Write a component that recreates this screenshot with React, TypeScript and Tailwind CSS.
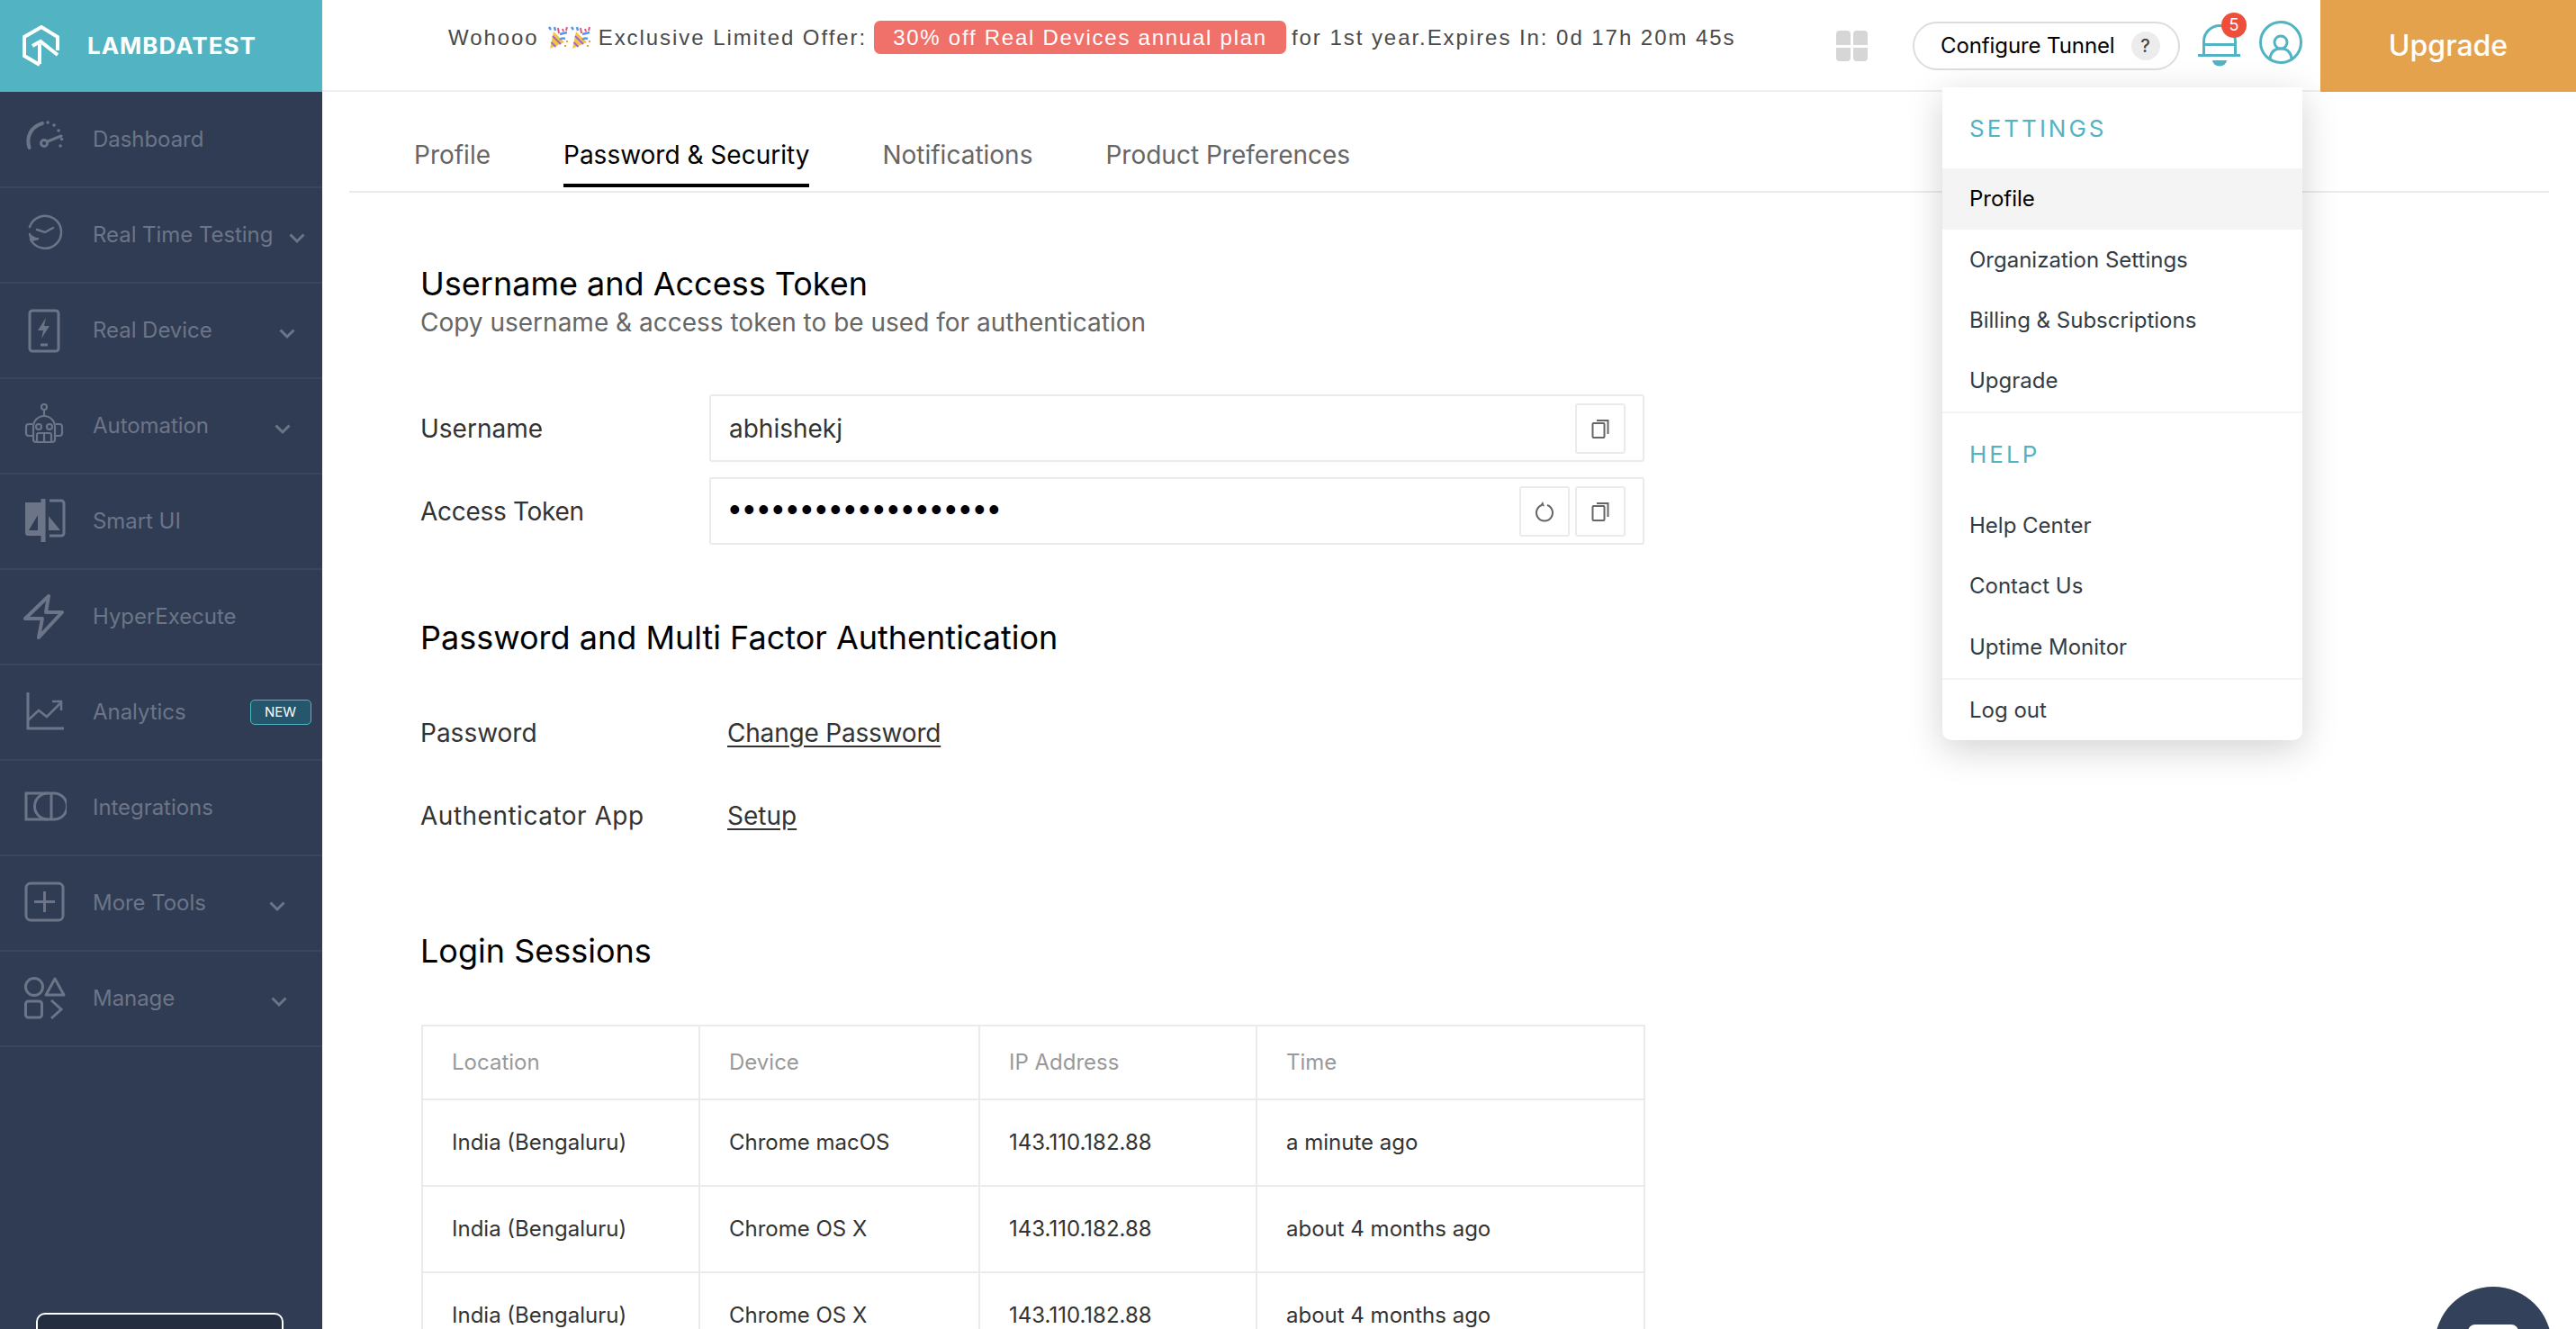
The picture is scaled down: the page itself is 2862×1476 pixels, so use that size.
import React from "react";

const ICON = "#6c7587";

function Chevron({ ml }: { ml: string }) {
  return (
    <svg className={`${ml} mt-[8px] shrink-0`} width="18" height="12" viewBox="0 0 18 12" fill="none" stroke={ICON} strokeWidth="3">
      <path d="M1.500 1.500 9 9l7.500-7.500" />
    </svg>
  );
}

const icons: Record<string, React.ReactNode> = {
  dashboard: (
    <g fill="none" stroke={ICON} strokeWidth="3" strokeLinecap="round">
      <path d="M6.500 34C3 22 8 11 21 7" strokeWidth="4" />
      <circle cx="23" cy="29" r="3.500" />
      <path d="M27 27l15-6" />
      <path d="M27 6h.1M34 9h.1M39 15h.1M42.500 24.500h.1M41 32h.1" strokeWidth="3.500" />
    </g>
  ),
  clock: (
    <g fill="none" stroke={ICON} strokeWidth="2.500" strokeLinecap="round">
      <path d="M8 30A18 18 0 1 0 7 16" />
      <path d="M7 24l2 7 7-2" fill={ICON} />
      <path d="M15 19l9 3 9-5" />
    </g>
  ),
  device: (
    <g fill="none" stroke={ICON} strokeWidth="3">
      <rect x="7" y="3" width="32" height="45" rx="3" />
      <path d="M25 11l-9 14h6l-2 9 9-14h-6z" fill={ICON} stroke="none" />
      <path d="M19 41h8" />
    </g>
  ),
  robot: (
    <g fill="none" stroke={ICON} strokeWidth="2.200">
      <circle cx="23" cy="4" r="3" />
      <path d="M23 7v7" />
      <path d="M11 40V26a12 12 0 0 1 12-12 12 12 0 0 1 12 12v14a3 3 0 0 1-3 3H14a3 3 0 0 1-3-3z" />
      <path d="M10 23H6a3 3 0 0 0-3 3v7a3 3 0 0 0 3 3h4M36 23h4a3 3 0 0 1 3 3v7a3 3 0 0 1-3 3h-4" />
      <circle cx="17" cy="26" r="3" />
      <circle cx="29" cy="26" r="3" />
      <path d="M15 43v-8a2 2 0 0 1 2-2h12a2 2 0 0 1 2 2v8M23 33v10" />
    </g>
  ),
  smart: (
    <g>
      <path d="M2 4h18v37H5a3 3 0 0 1-3-3z" fill={ICON} />
      <path d="M16 18v17H6z" fill="#303c54" />
      <rect x="19.500" y="0" width="5" height="48" fill={ICON} />
      <path d="M29 2h13a3 3 0 0 1 3 3v33a3 3 0 0 1-3 3H29" fill="none" stroke={ICON} strokeWidth="3" />
      <path d="M28 19l13 16H28z" fill={ICON} />
    </g>
  ),
  hyper: (
    <g fill="none" stroke={ICON} strokeWidth="4" strokeLinejoin="round">
      <path d="M28 2 2 27h19l-4 21 26-28H25z" />
    </g>
  ),
  analytics: (
    <g fill="none" stroke={ICON} strokeWidth="2.500">
      <path d="M5 3v40h40" strokeWidth="3" />
      <path d="M5 34l12-11 9 7 15-15" />
      <path d="M32 13h10v10" />
    </g>
  ),
  integrations: (
    <g fill="none" stroke={ICON} strokeWidth="3">
      <path d="M3 9h31a13 13 0 0 1 0 29H3z" />
      <path d="M27 9a14.500 14.500 0 0 0 0 29" />
      <path d="M31 9v29" />
    </g>
  ),
  more: (
    <g fill="none" stroke={ICON} strokeWidth="3">
      <rect x="3" y="3" width="41" height="41" rx="5" />
      <path d="M23.500 12v23M12 23.500h23" />
    </g>
  ),
  manage: (
    <g fill="none" stroke={ICON} strokeWidth="3">
      <circle cx="12" cy="12" r="9.500" />
      <path d="M35 3l10 18H25z" strokeLinejoin="round" />
      <rect x="2.500" y="28" width="18" height="18" rx="3" />
      <path d="M31 27l11 10-11 10" />
    </g>
  ),
};

const nav: { label: string; icon: string; chev?: string; badge?: boolean }[] = [
  { label: "Dashboard", icon: "dashboard" },
  { label: "Real Time Testing", icon: "clock", chev: "ml-[18px]" },
  { label: "Real Device", icon: "device", chev: "ml-[74px]" },
  { label: "Automation", icon: "robot", chev: "ml-[73px]" },
  { label: "Smart UI", icon: "smart" },
  { label: "HyperExecute", icon: "hyper" },
  { label: "Analytics", icon: "analytics", badge: true },
  { label: "Integrations", icon: "integrations" },
  { label: "More Tools", icon: "more", chev: "ml-[70px]" },
  { label: "Manage", icon: "manage", chev: "ml-[107px]" },
];

function Sidebar() {
  return (
    <aside className="w-[358px] shrink-0 h-full bg-[#303c54] relative">
      <div className="h-[102px] bg-[#52b4c2] flex items-center pl-[25px]">
        <svg width="41" height="46" viewBox="0 0 41 46" fill="none" stroke="#fff" strokeWidth="4" strokeLinejoin="miter">
          <path d="M19 44 2 34V13L21 2l18 11v15" />
          <path d="M19 43V21" />
          <path d="M11 23l9-5 19 15" />
        </svg>
        <span className="ml-[31px] text-white font-bold text-[26px] tracking-[1px] leading-none">LAMBDATEST</span>
      </div>
      <div className="pt-px">
        {nav.map((n) => (
          <div key={n.label} className="h-[106px] border-b-2 border-[#3a4660] flex items-center">
            <div className="w-[103px] shrink-0 pl-[26px]">
              <svg width="48" height="50" viewBox="0 0 48 50">{icons[n.icon]}</svg>
            </div>
            <span className="text-[24px] text-[#6c7587] tracking-[-0.05px] whitespace-nowrap">{n.label}</span>
            {n.chev && <Chevron ml={n.chev} />}
            {n.badge && (
              <span className="ml-[71px] w-[68px] h-[28px] rounded-[5px] border border-[#4bb8c4] bg-[#25566c] text-white text-[15px] leading-[26px] text-center">NEW</span>
            )}
          </div>
        ))}
      </div>
      <div className="absolute left-[40px] top-[1458px] w-[275px] h-[60px] bg-[#252d40] border-2 border-white rounded-[10px]" />
    </aside>
  );
}

function Poppers() {
  const one = (
    <g>
      <path d="M3 25 7 6l12 12z" fill="#f5c542" />
      <path d="M4.500 18l5 5M6 11l9 9" stroke="#a066d8" strokeWidth="2" />
      <path d="M2 1l2 3M8 1l1 4M20 14c-3-1-5 0-6 1" stroke="#5a96e8" strokeWidth="2.500" fill="none" />
      <path d="M14 9 22 7" stroke="#5a96e8" strokeWidth="2.500" />
      <path d="M12 2l1 6M17 3l1 3M22 1l-1 4" stroke="#e0567f" strokeWidth="2" />
      <path d="M21 17h2M19 22h2" stroke="#e0a050" strokeWidth="2" />
    </g>
  );
  return (
    <svg className="mx-[9px] shrink-0" width="48" height="26" viewBox="0 0 48 26">
      {one}
      <g transform="translate(25 0)">{one}</g>
    </svg>
  );
}

function TopBar() {
  return (
    <header className="h-[102px] shrink-0 bg-white border-b-2 border-[#efefef] flex items-start font-['Liberation_Sans',sans-serif]">
      <div className="ml-[140px] mt-[23px] h-[37px] flex items-center text-[24px] tracking-[1.95px] text-[#4a4a4a] whitespace-nowrap">
        <span>Wohooo</span>
        <Poppers />
        <span>Exclusive Limited Offer:</span>
        <span className="ml-[8px] h-[37px] px-[21px] rounded-[7px] bg-[#f0706a] text-white leading-[37px] tracking-[1.75px]">30% off Real Devices annual plan</span>
        <span className="ml-[6px]">for 1st year.Expires In: 0d 17h 20m 45s</span>
      </div>
      <div className="absolute left-[2040px] top-[34px] w-[35px] h-[34px] grid grid-cols-2 gap-[3px]">
        <span className="bg-[#d6d6d6] rounded-t-[4px]" />
        <span className="bg-[#d6d6d6] rounded-t-[4px]" />
        <span className="bg-[#d6d6d6] rounded-b-[4px]" />
        <span className="bg-[#d6d6d6] rounded-b-[4px]" />
      </div>
      <div className="absolute left-[2125px] top-[24px] w-[297px] h-[54px] rounded-full border-2 border-[#dddddd] bg-white flex items-center pl-[29px] font-['Inter',sans-serif] text-[24px] tracking-[-0.1px] text-black">
        <span className="whitespace-nowrap">Configure Tunnel</span>
        <span className="ml-[18px] w-[32px] h-[32px] rounded-full bg-[#ececec] text-[#444] text-[20px] leading-[32px] text-center font-medium">?</span>
      </div>
      <svg className="absolute left-[2442px] top-[26px]" width="48" height="48" viewBox="0 0 48 48" fill="none" stroke="#52b4c2" strokeWidth="3">
        <path d="M6.500 35V20A17.500 17.500 0 0 1 41.500 20V35" />
        <path d="M6 23.500h36" />
        <path d="M0 35.500h47" />
        <path d="M16 41h16a8 6.500 0 0 1-16 0z" fill="#52b4c2" stroke="none" />
      </svg>
      <span className="absolute left-[2468px] top-[14px] w-[28px] h-[28px] rounded-full bg-[#ee4e3a] text-white text-[18px] leading-[28px] text-center font-['Inter',sans-serif]">5</span>
      <svg className="absolute left-[2510px] top-[23px]" width="48" height="48" viewBox="0 0 48 48" fill="none" stroke="#52b4c2" strokeWidth="3">
        <circle cx="24" cy="24" r="22.500" />
        <circle cx="24" cy="24" r="7" />
        <path d="M12 42c1-8 6-11 12-11s11 3 12 11" />
      </svg>
      <div className="absolute right-0 top-0 w-[284px] h-[102px] bg-[#e5a24d] text-white text-[32px] font-medium font-['Inter',sans-serif] flex items-center justify-center">Upgrade</div>
    </header>
  );
}

function CopyIcon() {
  return (
    <svg width="20" height="22" viewBox="0 0 20 22" fill="none" stroke="#666" strokeWidth="2">
      <rect x="1.500" y="5" width="13" height="16" rx="1" />
      <path d="M6 2h12.500v15" />
    </svg>
  );
}

function IconBtn({ children }: { children: React.ReactNode }) {
  return (
    <span className="w-[56px] h-[56px] border-2 border-[#ebebeb] rounded-[3px] flex items-center justify-center">{children}</span>
  );
}

function Field({ label, children, btns, track }: { label: string; children: React.ReactNode; btns: React.ReactNode; track?: string }) {
  return (
    <div className="flex items-center h-[75px]">
      <span className={`w-[321px] shrink-0 text-[28px] text-[#333] ${track ?? ""}`}>{label}</span>
      <div className="w-[1039px] h-[75px] border-2 border-[#ebebeb] rounded-[3px] flex items-center pl-[20px] pr-[19px]">
        <div className="flex-1 text-[28px] text-[#333]">{children}</div>
        <div className="flex gap-[6px]">{btns}</div>
      </div>
    </div>
  );
}

const rows = [
  ["India (Bengaluru)", "Chrome macOS", "143.110.182.88", "a minute ago"],
  ["India (Bengaluru)", "Chrome OS X", "143.110.182.88", "about 4 months ago"],
  ["India (Bengaluru)", "Chrome OS X", "143.110.182.88", "about 4 months ago"],
];

function Row({ cells, head, h }: { cells: string[]; head?: boolean; h: string }) {
  return (
    <div className={`grid grid-cols-[308px_311px_308px_1fr] ${h} border-b-2 border-[#ebebeb]`}>
      {cells.map((c, i) => (
        <div key={i} className={`flex items-center pl-[32px] text-[24px] whitespace-nowrap ${i < 3 ? "border-r-2 border-[#ebebeb]" : ""} ${head ? "text-[#999]" : "text-[#333]"}`}>{c}</div>
      ))}
    </div>
  );
}

function Content() {
  return (
    <div className="flex-1 min-h-0 overflow-hidden">
      <div className="mx-[30px] h-[112px] border-b-2 border-[#ebebeb] flex pl-[72px] gap-[81px] text-[28px]">
        {["Profile", "Password & Security", "Notifications", "Product Preferences"].map((t, i) => (
          <div key={t} className={`h-[106px] pt-[50px] leading-[40px] whitespace-nowrap ${i === 1 ? "text-black border-b-4 border-black" : "text-[#666]"}`}>{t}</div>
        ))}
      </div>
      <div className="ml-[109px]">
        <h2 className="mt-[79px] text-[36px] leading-[44px] text-black">Username and Access Token</h2>
        <p className="mt-[3px] text-[28px] leading-[36px] text-[#666]">Copy username &amp; access token to be used for authentication</p>
        <div className="mt-[62px] flex flex-col gap-[17px]">
          <Field label="Username" btns={<IconBtn><CopyIcon /></IconBtn>}>abhishekj</Field>
          <Field
            label="Access Token"
            track="tracking-[-0.3px]"
            btns={
              <>
                <IconBtn>
                  <svg width="22" height="24" viewBox="0 0 22 24" fill="none" stroke="#666" strokeWidth="2">
                    <path d="M8 5a9 9 0 1 0 6 0" />
                    <path d="M9 1 6.500 5 11 6.500z" fill="#666" stroke="none" />
                  </svg>
                </IconBtn>
                <IconBtn><CopyIcon /></IconBtn>
              </>
            }
          >
            <span className="font-['Liberation_Sans',sans-serif] text-black text-[36px] leading-none tracking-[3.4px]">•••••••••••••••••••</span>
          </Field>
        </div>
        <h2 className="mt-[81px] text-[36px] leading-[44px] text-black">Password and Multi Factor Authentication</h2>
        <div className="mt-[64px] h-[40px] flex items-center text-[28px] text-[#333]">
          <span className="w-[341px]">Password</span>
          <a className="underline underline-offset-4 tracking-[-0.2px]">Change Password</a>
        </div>
        <div className="mt-[52px] h-[40px] flex items-center text-[28px] text-[#333]">
          <span className="w-[341px] tracking-[0.5px]">Authenticator App</span>
          <a className="underline underline-offset-4">Setup</a>
        </div>
        <h2 className="mt-[108px] text-[36px] leading-[44px] text-black">Login Sessions</h2>
        <div className="mt-[60px] ml-px w-[1360px] border-2 border-b-0 border-[#ebebeb]">
          <Row head cells={["Location", "Device", "IP Address", "Time"]} h="h-[82px]" />
          {rows.map((r, i) => (
            <Row key={i} cells={r} h="h-[96px]" />
          ))}
        </div>
      </div>
    </div>
  );
}

function Menu() {
  const pad = "flex items-center pl-[30px] text-[24px] text-[#333c44]";
  const head = "flex items-center pl-[30px] text-[26px] tracking-[3px] text-[#52b4c2]";
  return (
    <div className="absolute left-[2158px] top-[97px] w-[400px] h-[725px] bg-white rounded-b-[10px] shadow-[0_10px_40px_rgba(0,0,0,0.18)]">
      <div className={`h-[90px] ${head}`}>SETTINGS</div>
      <div className="h-[68px] bg-[#f4f4f4] flex items-center pl-[30px] text-[24px] text-black">Profile</div>
      <div className={`h-[67px] ${pad}`}>Organization Settings</div>
      <div className={`h-[67px] ${pad}`}>Billing &amp; Subscriptions</div>
      <div className={`h-[68px] ${pad}`}>Upgrade</div>
      <div className="h-[2px] bg-[#f4f4f4]" />
      <div className={`h-[91px] ${head}`}>HELP</div>
      <div className={`h-[67px] ${pad}`}>Help Center</div>
      <div className={`h-[67px] ${pad}`}>Contact Us</div>
      <div className={`h-[69px] ${pad}`}>Uptime Monitor</div>
      <div className="h-[2px] bg-[#f4f4f4]" />
      <div className={`h-[68px] ${pad}`}>Log out</div>
    </div>
  );
}

export default function App() {
  return (
    <div className="relative w-[2862px] h-[1476px] overflow-hidden bg-white flex font-['Inter',sans-serif]">
      <Sidebar />
      <main className="flex-1 min-w-0 h-full flex flex-col">
        <TopBar />
        <Content />
      </main>
      <Menu />
      <div className="absolute left-[2705px] top-[1429px] w-[130px] h-[130px] rounded-full bg-[#34415a]">
        <div className="absolute left-[37px] top-[42px] w-[56px] h-[40px] bg-white rounded-[8px]" />
      </div>
    </div>
  );
}
